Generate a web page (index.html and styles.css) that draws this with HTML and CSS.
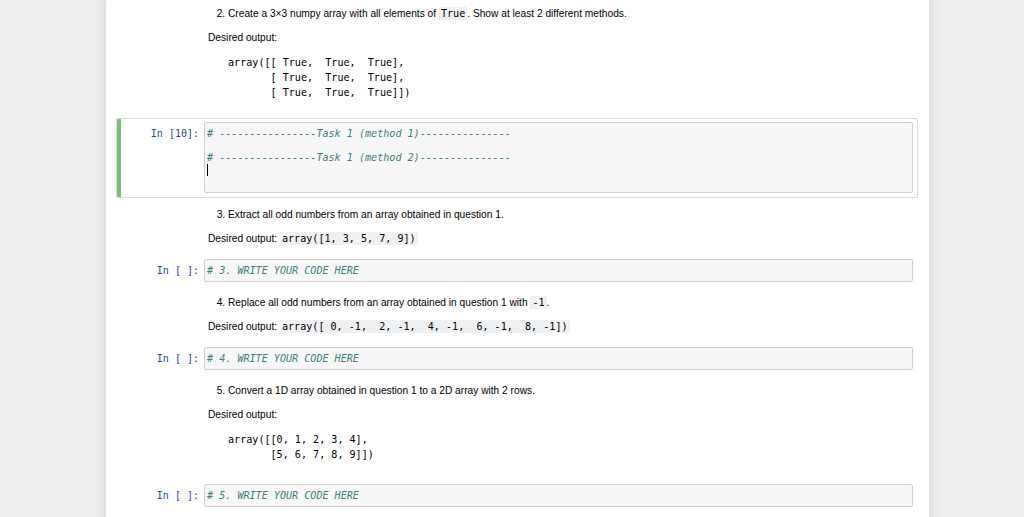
FILE: index.html
```html
<!DOCTYPE html>
<html>
<head>
<meta charset="utf-8">
<link rel="stylesheet" href="styles.css">
</head>
<body>
<div class="notebook">
  <div class="cell text first">
    <div class="prompt"></div>
    <div class="render">
      <ol start="2"><li>Create a 3×3 numpy array with all elements of <code>True</code>. Show at least 2 different methods.</li></ol>
      <p>Desired output:</p>
<pre>array([[ True,  True,  True],
       [ True,  True,  True],
       [ True,  True,  True]])</pre>
    </div>
  </div>

  <div class="cell code selected">
    <div class="prompt">In&nbsp;[10]:</div>
    <div class="input"><div class="line"><span class="cm"># ----------------Task 1 (method 1)---------------</span></div><div class="line">&nbsp;</div><div class="line"><span class="cm"># ----------------Task 1 (method 2)---------------</span></div><div class="line"><span class="cursor"></span></div><div class="line">&nbsp;</div></div>
  </div>

  <div class="cell text">
    <div class="prompt"></div>
    <div class="render">
      <ol start="3"><li>Extract all odd numbers from an array obtained in question 1.</li></ol>
      <p>Desired output: <code>array([1, 3, 5, 7, 9])</code></p>
    </div>
  </div>

  <div class="cell code">
    <div class="prompt">In&nbsp;[&nbsp;]:</div>
    <div class="input"><div class="line"><span class="cm"># 3. WRITE YOUR CODE HERE</span></div></div>
  </div>

  <div class="cell text">
    <div class="prompt"></div>
    <div class="render">
      <ol start="4"><li>Replace all odd numbers from an array obtained in question 1 with <code>-1</code>.</li></ol>
      <p>Desired output: <code>array([ 0, -1,  2, -1,  4, -1,  6, -1,  8, -1])</code></p>
    </div>
  </div>

  <div class="cell code">
    <div class="prompt">In&nbsp;[&nbsp;]:</div>
    <div class="input"><div class="line"><span class="cm"># 4. WRITE YOUR CODE HERE</span></div></div>
  </div>

  <div class="cell text">
    <div class="prompt"></div>
    <div class="render">
      <ol start="5"><li>Convert a 1D array obtained in question 1 to a 2D array with 2 rows.</li></ol>
      <p>Desired output:</p>
<pre>array([[0, 1, 2, 3, 4],
       [5, 6, 7, 8, 9]])</pre>
    </div>
  </div>

  <div class="cell code">
    <div class="prompt">In&nbsp;[&nbsp;]:</div>
    <div class="input"><div class="line"><span class="cm"># 5. WRITE YOUR CODE HERE</span></div></div>
  </div>
</div>
</body>
</html>
```
FILE: styles.css
```css
html, body {
  margin: 0;
  padding: 0;
}
body {
  background: #eeeeee;
  font-family: "Liberation Sans", Arial, Helvetica, sans-serif;
  font-size: 10.2px;
  color: #000;
  overflow: hidden;
}
.notebook {
  width: 802px;
  margin: -3px 0 0 106px;
  padding: 0 11px 40px 10px;
  background: #ffffff;
  box-shadow: 0 0 10px 1px rgba(87, 87, 87, 0.18);
}
.cell {
  display: flex;
  align-items: flex-start;
  border: 1px solid transparent;
  border-radius: 2px;
  padding: 3px 4px 4px 4px;
}
.cell.code {
  padding-bottom: 3px;
}
.cell.selected {
  padding-bottom: 4px;
  border-color: #c9e5c9;
  background: linear-gradient(to right, #7cbf7c 0, #7cbf7c 4px, transparent 4px, transparent 100%);
}
.prompt {
  flex: 0 0 83px;
  box-sizing: border-box;
  text-align: right;
  padding: 5.5px 5px 0 0;
  font-family: "DejaVu Sans Mono", "Liberation Mono", monospace;
  font-size: 10px;
  line-height: 12px;
  color: #303f9f;
  white-space: nowrap;
}
.input {
  flex: 1;
  min-width: 0;
  background: #f7f7f7;
  border: 1px solid #cfcfcf;
  border-radius: 2px;
  padding: 4.5px 2px 4.5px 2px;
  font-family: "DejaVu Sans Mono", "Liberation Mono", monospace;
  font-size: 10.1px;
  line-height: 12px;
  white-space: pre;
}
.line {
  height: 12px;
}
.cm {
  color: #3d7f7f;
  font-style: italic;
}
.cursor {
  display: inline-block;
  width: 1px;
  height: 12px;
  background: #000;
  vertical-align: -2px;
}
.render {
  flex: 1;
  min-width: 0;
  padding: 6px 5px 4px 4px;
  line-height: 14px;
}
.render ol {
  margin: 0;
  padding-left: 20px;
}
.render p {
  margin: 10px 0 0 0;
}
.render pre {
  margin: 10px 20px 9px 20px;
  font-family: "DejaVu Sans Mono", "Liberation Mono", monospace;
  font-size: 10.1px;
  line-height: 15px;
}
.render code {
  font-family: "DejaVu Sans Mono", "Liberation Mono", monospace;
  font-size: 10.1px;
  background: #eff0f1;
  padding: 1px 2px;
  white-space: pre;
}
```
